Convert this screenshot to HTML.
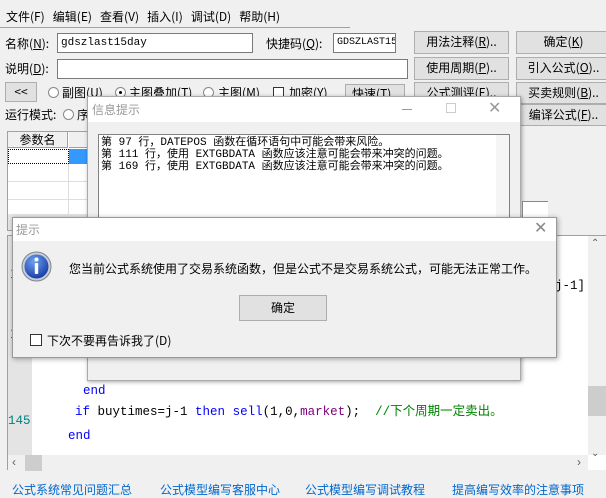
<!DOCTYPE html>
<html><head><meta charset="utf-8"><style>
*{margin:0;padding:0;box-sizing:border-box}
body{width:606px;height:487px;overflow:hidden;background:#f0f0f0;position:relative;font-family:"Liberation Sans","Noto Sans CJK SC",sans-serif;font-size:12px;color:#000}
.a{position:absolute;white-space:nowrap}
.btn{position:absolute;background:#e1e1e1;border:1px solid #adadad;text-align:center;font-size:12px;line-height:20px;font-family:"Noto Sans CJK SC",sans-serif}
.inp{position:absolute;background:#fff;border:1px solid #7a7a7a;font-family:"Liberation Mono","Noto Sans CJK SC",monospace;font-size:11px;padding-left:3px;line-height:18px}
.sim{font-family:"Noto Sans CJK SC",sans-serif;font-size:12px}
.rad{position:absolute;width:11px;height:11px;border:1px solid #333;border-radius:50%;background:#fff}
.code{position:absolute;font-family:"Liberation Mono","Noto Sans CJK SC",monospace;font-size:12.5px;white-space:nowrap}
</style></head><body>
<!-- menu -->
<div class="a sim" style="left:6px;top:8px;color:#000;word-spacing:0">文件(F)&nbsp;&nbsp; 编辑(E)&nbsp;&nbsp; 查看(V)&nbsp;&nbsp; 插入(I)&nbsp;&nbsp; 调试(D)&nbsp;&nbsp; 帮助(H)</div>
<div class="a" style="left:0;top:27px;width:350px;height:1px;background:#a0a0a0"></div>
<!-- row1 -->
<div class="a sim" style="left:5px;top:35px">名称(<u>N</u>):</div>
<div class="inp" style="left:57px;top:33px;width:196px;height:20px">gdszlast15day</div>
<div class="a sim" style="left:266px;top:35px">快捷码(<u>Q</u>):</div>
<div class="inp" style="left:333px;top:33px;width:63px;height:20px;overflow:hidden;font-size:10px">GDSZLAST15DA</div>
<div class="btn" style="left:414px;top:31px;width:95px;height:23px">用法注释(<u>R</u>)..</div>
<div class="btn" style="left:516px;top:31px;width:95px;height:23px">确定(<u>K</u>)</div>
<!-- row2 -->
<div class="a sim" style="left:5px;top:60px">说明(<u>D</u>):</div>
<div class="inp" style="left:57px;top:59px;width:351px;height:20px"></div>
<div class="btn" style="left:414px;top:57px;width:95px;height:23px">使用周期(<u>P</u>)..</div>
<div class="btn" style="left:516px;top:57px;width:95px;height:23px">引入公式(<u>O</u>)..</div>
<!-- row3 -->
<div class="btn" style="left:5px;top:82px;width:32px;height:20px;line-height:18px">&lt;&lt;</div>
<div class="rad" style="left:48px;top:87px;border-color:#888"></div>
<div class="a sim" style="left:62px;top:84px">副图(<u>U</u>)</div>
<div class="rad" style="left:115px;top:87px;border-color:#888"><span style="position:absolute;left:3px;top:3px;width:3px;height:3px;background:#000;border-radius:50%"></span></div>
<div class="a sim" style="left:129px;top:84px">主图叠加(<u>T</u>)</div>
<div class="rad" style="left:203px;top:87px;border-color:#888"></div>
<div class="a sim" style="left:218px;top:84px">主图(<u>M</u>)</div>
<div class="a" style="left:273px;top:87px;width:11px;height:11px;border:1px solid #333;background:#fff"></div>
<div class="a sim" style="left:289px;top:84px">加密(<u>Y</u>)</div>
<div class="btn" style="left:345px;top:84px;width:60px;height:20px;line-height:18px">快速(<u>T</u>)..</div>
<div class="btn" style="left:414px;top:82px;width:95px;height:22px">公式测评(<u>E</u>)..</div>
<div class="btn" style="left:516px;top:82px;width:95px;height:22px">买卖规则(<u>B</u>)..</div>
<!-- row4 -->
<div class="a sim" style="left:5px;top:106px">运行模式:</div>
<div class="rad" style="left:63px;top:109px;border-color:#888"></div>
<div class="a sim" style="left:77px;top:106px">序</div>
<div class="btn" style="left:516px;top:104px;width:95px;height:22px">编译公式(<u>F</u>)..</div>
<!-- param table -->
<div class="a" style="left:7px;top:131px;width:82px;height:100px;background:#fff;border:1px solid #a0a0a0"></div>
<div class="a sim" style="left:8px;top:132px;width:60px;height:16px;background:#f0f0f0;border-right:1px solid #a0a0a0;border-bottom:1px solid #a0a0a0;text-align:center;line-height:15px">参数名</div>
<div class="a" style="left:69px;top:132px;width:20px;height:16px;background:#f0f0f0;border-bottom:1px solid #a0a0a0"></div>
<div class="a" style="left:8px;top:149px;width:61px;height:15px;border:1px dotted #000"></div>
<div class="a" style="left:69px;top:149px;width:20px;height:15px;background:#3399ff"></div>
<div class="a" style="left:8px;top:181px;width:81px;height:1px;background:#ddd"></div>
<div class="a" style="left:8px;top:199px;width:81px;height:1px;background:#ddd"></div>
<div class="a" style="left:68px;top:164px;width:1px;height:50px;background:#ddd"></div>
<div class="a" style="left:8px;top:214px;width:81px;height:16px;background:#e6e6e6"></div>
<!-- editor -->
<div class="a" style="left:7px;top:235px;width:599px;height:235px;background:#fff;border-top:1px solid #a0a0a0;border-left:1px solid #a0a0a0"></div>
<div class="a" style="left:8px;top:236px;width:24px;height:219px;background:#e4e4e4"></div>
<div class="a" style="left:588px;top:236px;width:18px;height:219px;background:#f0f0f0"></div>
<div class="a" style="left:588px;top:386px;width:18px;height:30px;background:#cdcdcd"></div>
<div class="a" style="left:591px;top:238px;color:#606060;font-size:10px">&#8963;</div>
<div class="a" style="left:591px;top:448px;color:#606060;font-size:10px">&#8964;</div>
<div class="a" style="left:8px;top:455px;width:580px;height:16px;background:#f0f0f0"></div>
<div class="a" style="left:25px;top:455px;width:17px;height:16px;background:#cdcdcd"></div>
<div class="a" style="left:12px;top:455px;color:#606060;font-size:12px">&lsaquo;</div>
<div class="a" style="left:577px;top:455px;color:#606060;font-size:12px">&rsaquo;</div>
<div class="code" style="left:555px;top:279px">j-1]</div>
<div class="code" style="left:83px;top:384px;color:#0000ff">end</div>
<div class="code" style="left:75px;top:400px"><span style="color:#0000ff">if</span> buytimes=j-1 <span style="color:#0000ff">then</span> <span style="color:#0000ff">sell</span>(1,0,<span style="color:#800080">market</span>); &nbsp;<span style="color:#008000">//下个周期一定卖出。</span></div>
<div class="code" style="left:8px;top:414px;color:#008080">145</div>
<div class="code" style="left:68px;top:429px;color:#0000ff">end</div>
<div class="a" style="left:10px;top:265px;color:#008080;font-size:14px">1</div>
<div class="a" style="left:10px;top:325px;color:#008080;font-size:14px">1</div>
<!-- links -->
<div class="a sim" style="left:12px;top:481px;color:#0066cc">公式系统常见问题汇总</div>
<div class="a sim" style="left:160px;top:481px;color:#0066cc">公式模型编写客服中心</div>
<div class="a sim" style="left:305px;top:481px;color:#0066cc">公式模型编写调试教程</div>
<div class="a sim" style="left:452px;top:481px;color:#0066cc">提高编写效率的注意事项</div>
<!-- info dialog -->
<div class="a" style="left:87px;top:96px;width:434px;height:285px;background:#f0f0f0;border:1px solid #aaa;box-shadow:1px 1px 4px rgba(0,0,0,.35)"></div>
<div class="a" style="left:88px;top:97px;width:432px;height:25px;background:#fff"></div>
<div class="a sim" style="left:92px;top:101px;color:#999;font-size:12px">信息提示</div>
<div class="a" style="left:402px;top:109px;width:10px;height:1px;background:#999"></div>
<div class="a" style="left:446px;top:103px;width:10px;height:10px;border:1px solid #ccc"></div>
<div class="a" style="left:488px;top:98px;color:#999;font-size:16px">✕</div>
<div class="a" style="left:98px;top:134px;width:412px;height:100px;background:#fff;border:1px solid #828282"></div>
<div class="a" style="left:496px;top:135px;width:13px;height:99px;background:#f5f5f5"></div>
<div class="a" style="left:101px;top:137px;font-family:'Liberation Mono','Noto Sans CJK SC',monospace;font-size:11px;line-height:12px;white-space:pre">第 97 行，DATEPOS 函数在循环语句中可能会带来风险。
第 111 行，使用 EXTGBDATA 函数应该注意可能会带来冲突的问题。
第 169 行，使用 EXTGBDATA 函数应该注意可能会带来冲突的问题。</div>
<div class="a" style="left:522px;top:201px;width:26px;height:18px;background:#fff;border-top:1px solid #888;border-left:1px solid #888"></div>
<!-- tip dialog -->
<div class="a" style="left:12px;top:217px;width:545px;height:141px;background:#f0f0f0;border:1px solid #999;box-shadow:1px 1px 5px rgba(0,0,0,.35)"></div>
<div class="a" style="left:13px;top:218px;width:543px;height:23px;background:#fff"></div>
<div class="a sim" style="left:16px;top:221px;color:#999">提示</div>
<div class="a" style="left:534px;top:218px;color:#888;font-size:16px">✕</div>
<svg class="a" style="left:21px;top:251px" width="31" height="31" viewBox="0 0 31 31">
<defs><radialGradient id="g" cx="40%" cy="30%" r="70%"><stop offset="0" stop-color="#6fa2f0"/><stop offset="1" stop-color="#1a3fa8"/></radialGradient></defs>
<circle cx="15.5" cy="15.5" r="14.5" fill="#c8ccd4" stroke="#7c8494"/>
<circle cx="15.5" cy="15.5" r="12" fill="url(#g)"/>
<circle cx="15.5" cy="8.5" r="2" fill="#fff"/>
<rect x="13.8" y="12" width="3.4" height="11" rx="1" fill="#fff"/>
</svg>
<div class="a sim" style="left:69px;top:260px;font-size:12px">您当前公式系统使用了交易系统函数，但是公式不是交易系统公式，可能无法正常工作。</div>
<div class="a sim" style="left:239px;top:295px;width:88px;height:26px;background:#e1e1e1;border:1px solid #adadad;text-align:center;line-height:24px">确定</div>
<div class="a" style="left:30px;top:334px;width:12px;height:12px;border:1px solid #333;background:#fff"></div>
<div class="a sim" style="left:47px;top:332px">下次不要再告诉我了(D)</div>
</body></html>
